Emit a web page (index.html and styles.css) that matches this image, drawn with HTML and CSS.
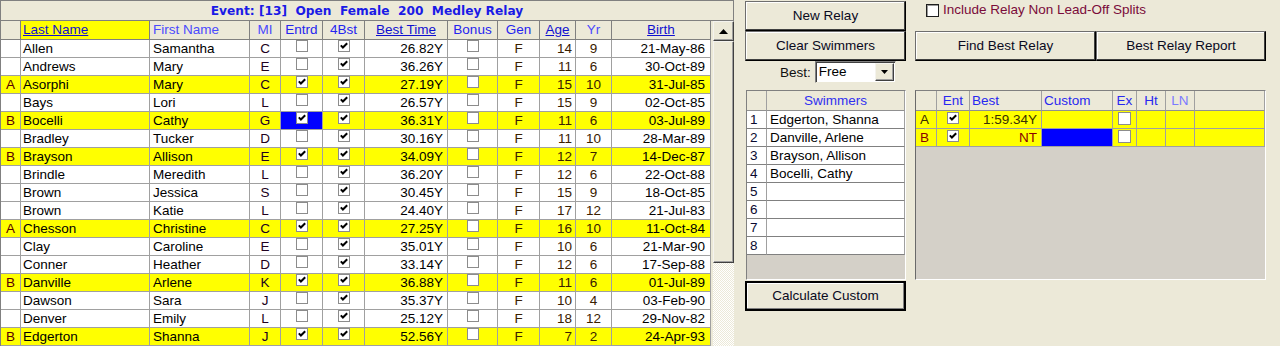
FILE: index.html
```html
<!DOCTYPE html>
<html>
<head>
<meta charset="utf-8">
<title>Relay</title>
<link rel="stylesheet" href="styles.css">
</head>
<body>
<div class="left">
  <div class="title">Event: [13]  Open  Female  200  Medley Relay</div>
  <div class="lbody">
    <div class="grid">
      <div class="row hdr">
        <div class="rh"></div>
        <div class="c ln sel-h u">Last Name</div>
        <div class="c fn lt">First Name</div>
        <div class="c ctr lt">MI</div>
        <div class="c ctr">Entrd</div>
        <div class="c ctr">4Bst</div>
        <div class="c ctr u">Best Time</div>
        <div class="c ctr">Bonus</div>
        <div class="c ctr">Gen</div>
        <div class="c ctr u">Age</div>
        <div class="c ctr lt">Yr</div>
        <div class="c ctr u">Birth</div>
      </div>

      <div class="row"><div class="rh"></div><div class="c ln">Allen</div><div class="c fn">Samantha</div><div class="c ctr mi">C</div><div class="c ctr"><span class="cb"></span></div><div class="c ctr"><span class="cb"><svg viewBox="0 0 10 10"><path d="M1.8 4.4l2.1 2.1 4.3-4.3"/></svg></span></div><div class="c bt">26.82Y</div><div class="c ctr"><span class="cb"></span></div><div class="c ctr br">F</div><div class="c age br">14</div><div class="c ctr br">9</div><div class="c bd">21-May-86</div></div>

      <div class="row"><div class="rh"></div><div class="c ln">Andrews</div><div class="c fn">Mary</div><div class="c ctr mi">E</div><div class="c ctr"><span class="cb"></span></div><div class="c ctr"><span class="cb"><svg viewBox="0 0 10 10"><path d="M1.8 4.4l2.1 2.1 4.3-4.3"/></svg></span></div><div class="c bt">36.26Y</div><div class="c ctr"><span class="cb"></span></div><div class="c ctr br">F</div><div class="c age br">11</div><div class="c ctr br">6</div><div class="c bd">30-Oct-89</div></div>

      <div class="row y"><div class="rh">A</div><div class="c ln">Asorphi</div><div class="c fn">Mary</div><div class="c ctr mi">C</div><div class="c ctr"><span class="cb"><svg viewBox="0 0 10 10"><path d="M1.8 4.4l2.1 2.1 4.3-4.3"/></svg></span></div><div class="c ctr"><span class="cb"><svg viewBox="0 0 10 10"><path d="M1.8 4.4l2.1 2.1 4.3-4.3"/></svg></span></div><div class="c bt">27.19Y</div><div class="c ctr"><span class="cb"></span></div><div class="c ctr br">F</div><div class="c age br">15</div><div class="c ctr br">10</div><div class="c bd">31-Jul-85</div></div>

      <div class="row"><div class="rh"></div><div class="c ln">Bays</div><div class="c fn">Lori</div><div class="c ctr mi">L</div><div class="c ctr"><span class="cb"></span></div><div class="c ctr"><span class="cb"><svg viewBox="0 0 10 10"><path d="M1.8 4.4l2.1 2.1 4.3-4.3"/></svg></span></div><div class="c bt">26.57Y</div><div class="c ctr"><span class="cb"></span></div><div class="c ctr br">F</div><div class="c age br">15</div><div class="c ctr br">9</div><div class="c bd">02-Oct-85</div></div>

      <div class="row y"><div class="rh">B</div><div class="c ln">Bocelli</div><div class="c fn">Cathy</div><div class="c ctr mi">G</div><div class="c ctr blue"><span class="cb"><svg viewBox="0 0 10 10"><path d="M1.8 4.4l2.1 2.1 4.3-4.3"/></svg></span></div><div class="c ctr"><span class="cb"><svg viewBox="0 0 10 10"><path d="M1.8 4.4l2.1 2.1 4.3-4.3"/></svg></span></div><div class="c bt">36.31Y</div><div class="c ctr"><span class="cb"></span></div><div class="c ctr br">F</div><div class="c age br">11</div><div class="c ctr br">6</div><div class="c bd">03-Jul-89</div></div>

      <div class="row"><div class="rh"></div><div class="c ln">Bradley</div><div class="c fn">Tucker</div><div class="c ctr mi">D</div><div class="c ctr"><span class="cb"></span></div><div class="c ctr"><span class="cb"><svg viewBox="0 0 10 10"><path d="M1.8 4.4l2.1 2.1 4.3-4.3"/></svg></span></div><div class="c bt">30.16Y</div><div class="c ctr"><span class="cb"></span></div><div class="c ctr br">F</div><div class="c age br">11</div><div class="c ctr br">10</div><div class="c bd">28-Mar-89</div></div>

      <div class="row y"><div class="rh">B</div><div class="c ln">Brayson</div><div class="c fn">Allison</div><div class="c ctr mi">E</div><div class="c ctr"><span class="cb"><svg viewBox="0 0 10 10"><path d="M1.8 4.4l2.1 2.1 4.3-4.3"/></svg></span></div><div class="c ctr"><span class="cb"><svg viewBox="0 0 10 10"><path d="M1.8 4.4l2.1 2.1 4.3-4.3"/></svg></span></div><div class="c bt">34.09Y</div><div class="c ctr"><span class="cb"></span></div><div class="c ctr br">F</div><div class="c age br">12</div><div class="c ctr br">7</div><div class="c bd">14-Dec-87</div></div>

      <div class="row"><div class="rh"></div><div class="c ln">Brindle</div><div class="c fn">Meredith</div><div class="c ctr mi">L</div><div class="c ctr"><span class="cb"></span></div><div class="c ctr"><span class="cb"><svg viewBox="0 0 10 10"><path d="M1.8 4.4l2.1 2.1 4.3-4.3"/></svg></span></div><div class="c bt">36.20Y</div><div class="c ctr"><span class="cb"></span></div><div class="c ctr br">F</div><div class="c age br">12</div><div class="c ctr br">6</div><div class="c bd">22-Oct-88</div></div>

      <div class="row"><div class="rh"></div><div class="c ln">Brown</div><div class="c fn">Jessica</div><div class="c ctr mi">S</div><div class="c ctr"><span class="cb"></span></div><div class="c ctr"><span class="cb"><svg viewBox="0 0 10 10"><path d="M1.8 4.4l2.1 2.1 4.3-4.3"/></svg></span></div><div class="c bt">30.45Y</div><div class="c ctr"><span class="cb"></span></div><div class="c ctr br">F</div><div class="c age br">15</div><div class="c ctr br">9</div><div class="c bd">18-Oct-85</div></div>

      <div class="row"><div class="rh"></div><div class="c ln">Brown</div><div class="c fn">Katie</div><div class="c ctr mi">L</div><div class="c ctr"><span class="cb"></span></div><div class="c ctr"><span class="cb"><svg viewBox="0 0 10 10"><path d="M1.8 4.4l2.1 2.1 4.3-4.3"/></svg></span></div><div class="c bt">24.40Y</div><div class="c ctr"><span class="cb"></span></div><div class="c ctr br">F</div><div class="c age br">17</div><div class="c ctr br">12</div><div class="c bd">21-Jul-83</div></div>

      <div class="row y"><div class="rh">A</div><div class="c ln">Chesson</div><div class="c fn">Christine</div><div class="c ctr mi">C</div><div class="c ctr"><span class="cb"><svg viewBox="0 0 10 10"><path d="M1.8 4.4l2.1 2.1 4.3-4.3"/></svg></span></div><div class="c ctr"><span class="cb"><svg viewBox="0 0 10 10"><path d="M1.8 4.4l2.1 2.1 4.3-4.3"/></svg></span></div><div class="c bt">27.25Y</div><div class="c ctr"><span class="cb"></span></div><div class="c ctr br">F</div><div class="c age br">16</div><div class="c ctr br">10</div><div class="c bd">11-Oct-84</div></div>

      <div class="row"><div class="rh"></div><div class="c ln">Clay</div><div class="c fn">Caroline</div><div class="c ctr mi">E</div><div class="c ctr"><span class="cb"></span></div><div class="c ctr"><span class="cb"><svg viewBox="0 0 10 10"><path d="M1.8 4.4l2.1 2.1 4.3-4.3"/></svg></span></div><div class="c bt">35.01Y</div><div class="c ctr"><span class="cb"></span></div><div class="c ctr br">F</div><div class="c age br">10</div><div class="c ctr br">6</div><div class="c bd">21-Mar-90</div></div>

      <div class="row"><div class="rh"></div><div class="c ln">Conner</div><div class="c fn">Heather</div><div class="c ctr mi">D</div><div class="c ctr"><span class="cb"></span></div><div class="c ctr"><span class="cb"><svg viewBox="0 0 10 10"><path d="M1.8 4.4l2.1 2.1 4.3-4.3"/></svg></span></div><div class="c bt">33.14Y</div><div class="c ctr"><span class="cb"></span></div><div class="c ctr br">F</div><div class="c age br">12</div><div class="c ctr br">6</div><div class="c bd">17-Sep-88</div></div>

      <div class="row y"><div class="rh">B</div><div class="c ln">Danville</div><div class="c fn">Arlene</div><div class="c ctr mi">K</div><div class="c ctr"><span class="cb"><svg viewBox="0 0 10 10"><path d="M1.8 4.4l2.1 2.1 4.3-4.3"/></svg></span></div><div class="c ctr"><span class="cb"><svg viewBox="0 0 10 10"><path d="M1.8 4.4l2.1 2.1 4.3-4.3"/></svg></span></div><div class="c bt">36.88Y</div><div class="c ctr"><span class="cb"></span></div><div class="c ctr br">F</div><div class="c age br">11</div><div class="c ctr br">6</div><div class="c bd">01-Jul-89</div></div>

      <div class="row"><div class="rh"></div><div class="c ln">Dawson</div><div class="c fn">Sara</div><div class="c ctr mi">J</div><div class="c ctr"><span class="cb"></span></div><div class="c ctr"><span class="cb"><svg viewBox="0 0 10 10"><path d="M1.8 4.4l2.1 2.1 4.3-4.3"/></svg></span></div><div class="c bt">35.37Y</div><div class="c ctr"><span class="cb"></span></div><div class="c ctr br">F</div><div class="c age br">10</div><div class="c ctr br">4</div><div class="c bd">03-Feb-90</div></div>

      <div class="row"><div class="rh"></div><div class="c ln">Denver</div><div class="c fn">Emily</div><div class="c ctr mi">L</div><div class="c ctr"><span class="cb"></span></div><div class="c ctr"><span class="cb"><svg viewBox="0 0 10 10"><path d="M1.8 4.4l2.1 2.1 4.3-4.3"/></svg></span></div><div class="c bt">25.12Y</div><div class="c ctr"><span class="cb"></span></div><div class="c ctr br">F</div><div class="c age br">18</div><div class="c ctr br">12</div><div class="c bd">29-Nov-82</div></div>

      <div class="row y"><div class="rh">B</div><div class="c ln">Edgerton</div><div class="c fn">Shanna</div><div class="c ctr mi">J</div><div class="c ctr"><span class="cb"><svg viewBox="0 0 10 10"><path d="M1.8 4.4l2.1 2.1 4.3-4.3"/></svg></span></div><div class="c ctr"><span class="cb"><svg viewBox="0 0 10 10"><path d="M1.8 4.4l2.1 2.1 4.3-4.3"/></svg></span></div><div class="c bt">52.56Y</div><div class="c ctr"><span class="cb"></span></div><div class="c ctr br">F</div><div class="c age br">7</div><div class="c ctr br">2</div><div class="c bd">24-Apr-93</div></div>
    </div>
    <div class="vscroll">
      <div class="sbtn"><svg width="9" height="5" viewBox="0 0 9 5"><path d="M4.5 0L9 5H0z"/></svg></div>
      <div class="thumb"></div>
      <div class="track"></div>
    </div>
  </div>
</div>

<div class="right">
  <div class="col1">
    <div class="btn">New Relay</div>
    <div class="btn">Clear Swimmers</div>
    <div class="bestrow">
      <span class="blbl">Best:</span>
      <div class="combo">
        <span class="cval">Free</span>
        <span class="carr"><svg width="7" height="4" viewBox="0 0 7 4"><path d="M0 0H7L3.5 4z"/></svg></span>
      </div>
    </div>
    <div class="swgrid">
      <div class="srow shdr"><div class="sc0"></div><div class="sc1 hc">Swimmers</div></div>
      <div class="srow"><div class="sc0">1</div><div class="sc1">Edgerton, Shanna</div></div>
      <div class="srow"><div class="sc0">2</div><div class="sc1">Danville, Arlene</div></div>
      <div class="srow"><div class="sc0">3</div><div class="sc1">Brayson, Allison</div></div>
      <div class="srow"><div class="sc0">4</div><div class="sc1">Bocelli, Cathy</div></div>
      <div class="srow"><div class="sc0">5</div><div class="sc1"></div></div>
      <div class="srow"><div class="sc0">6</div><div class="sc1"></div></div>
      <div class="srow"><div class="sc0">7</div><div class="sc1"></div></div>
      <div class="srow"><div class="sc0">8</div><div class="sc1"></div></div>
      <div class="gfill"></div>
    </div>
    <div class="btn dflt">Calculate Custom</div>
  </div>

  <div class="col2">
    <div class="opts">
      <span class="obox"></span>
      <span class="otxt">Include Relay Non Lead-Off Splits</span>
    </div>
    <div class="btnrow">
      <div class="btn wfind">Find Best Relay</div>
      <div class="btn wrep">Best Relay Report</div>
    </div>
    <div class="rgrid">
      <div class="rrow rhdr">
        <div class="rc"></div>
        <div class="rc ctr">Ent</div>
        <div class="rc lft">Best</div>
        <div class="rc lft">Custom</div>
        <div class="rc ctr">Ex</div>
        <div class="rc ctr">Ht</div>
        <div class="rc ctr lnh">LN</div>
        <div class="rc"></div>
      </div>
      <div class="rrow y">
        <div class="rc rlab">A</div>
        <div class="rc ctr"><span class="cb"><svg viewBox="0 0 10 10"><path d="M1.8 4.4l2.1 2.1 4.3-4.3"/></svg></span></div>
        <div class="rc rt olive">1:59.34Y</div>
        <div class="rc"></div>
        <div class="rc ctr"><span class="cb big"></span></div>
        <div class="rc"></div>
        <div class="rc"></div>
        <div class="rc"></div>
      </div>
      <div class="rrow y">
        <div class="rc rlab red">B</div>
        <div class="rc ctr"><span class="cb"><svg viewBox="0 0 10 10"><path d="M1.8 4.4l2.1 2.1 4.3-4.3"/></svg></span></div>
        <div class="rc rt red">NT</div>
        <div class="rc blue"></div>
        <div class="rc ctr"><span class="cb big"></span></div>
        <div class="rc"></div>
        <div class="rc"></div>
        <div class="rc"></div>
      </div>
      <div class="gfill"></div>
    </div>
  </div>
</div>
</body>
</html>
```

FILE: styles.css
```css
* { box-sizing: border-box; }
html, body { margin: 0; padding: 0; }
body {
  width: 1280px;
  height: 346px;
  overflow: hidden;
  background: #ECE9D8;
  font-family: "Liberation Sans", Arial, sans-serif;
  font-size: 13.5px;
  color: #000;
  display: flex;
  align-items: flex-start;
}

/* ---------- left grid panel ---------- */
.left {
  width: 734px;
  flex: none;
  border-top: 1px solid #808080;
  border-left: 1px solid #808080;
}
.title {
  height: 20px;
  border-bottom: 1px solid #808080;
  border-right: 1px solid #808080;
  text-align: center;
  white-space: pre;
  font-family: "DejaVu Sans", Verdana, sans-serif;
  font-weight: bold;
  font-size: 12.2px;
  line-height: 19px;
  padding-top: 1px;
  color: #1a1ae6;
}
.lbody { display: flex; }
.grid { width: 710px; flex: none; }
.row {
  display: grid;
  grid-template-columns: 20px 129px 100px 31px 42px 42px 83px 50px 42px 36px 36px 99px;
  height: 18px;
  background: #fff;
}
.row > div {
  border-right: 1px solid #a0a0a0;
  border-bottom: 1px solid #a0a0a0;
  line-height: 17px;
  white-space: nowrap;
  overflow: hidden;
}
.row.y { background: #ffff00; }
.row.hdr { height: 19px; background: #ECE9D8; }
.row.hdr > div {
  border-right-color: #808080;
  border-bottom-color: #808080;
  line-height: 18px;
  color: #2424f0;
}
.row.hdr > .lt { color: #4a4aff; }
.row.hdr > .u { text-decoration: underline; color: #1010d0; }
.row.hdr > .sel-h { background: #ffff00; }
.rh { text-align: center; color: #5a0000; }
.c { padding: 0 2px; }
.ln { padding-left: 2px; }
.fn { padding-left: 3px; }
.ctr { text-align: center; }
.mi { color: #200020; }
.br { color: #3a2000; }
.bt { text-align: right; padding-right: 4px; }
.age { text-align: right; padding-right: 3px; }
.bd { text-align: right; padding-right: 5px; }
.row > .blue, .rc.blue { background: #0000ff; }

/* checkbox */
.cb {
  display: inline-block;
  width: 12px;
  height: 12px;
  border: 1px solid #8c8c8c;
  background: #fff;
  vertical-align: top;
  margin-top: 0;
}
.cb svg {
  display: block;
  width: 10px;
  height: 10px;
  fill: none;
  stroke: #000;
  stroke-width: 2;
}
.cb.big { width: 13px; height: 13px; margin-top: 1px; }

/* scrollbar */
.vscroll {
  width: 21px;
  margin-left: 2px;
  height: 325px;
  display: flex;
  flex-direction: column;
}
.sbtn, .thumb {
  background: #ECE9D8;
  border: 1px solid;
  border-color: #f4f3ee #404040 #404040 #f4f3ee;
  box-shadow: inset -1px -1px #a0a0a0;
}
.sbtn {
  height: 20px;
  display: flex;
  align-items: center;
  justify-content: center;
}
.sbtn svg { fill: #000; }
.thumb { height: 222px; }
.track {
  flex: 1;
  background: repeating-conic-gradient(#ffffff 0 25%, #ECE9D8 0 50%) 0 0 / 2px 2px;
}

/* ---------- right side ---------- */
.right {
  display: flex;
  gap: 9px;
  margin-left: 11px;
  padding-top: 1px;
}
.col1 { width: 161px; display: flex; flex-direction: column; }
.col2 { width: 351px; display: flex; flex-direction: column; }

.btn {
  height: 30px;
  background: #ECE9D8;
  border: 1px solid;
  border-color: #6e6e6e #000 #000 #6e6e6e;
  box-shadow: inset -1px -1px #404040, inset 1px 1px #ffffff;
  text-align: center;
  line-height: 27px;
  color: #0a0a1e;
  white-space: nowrap;
}
.btn.dflt {
  margin-top: 1px;
  border: 2px solid #000;
  box-shadow: inset -1px -1px #808080, inset 1px 1px #ffffff;
  line-height: 25px;
}

.bestrow {
  height: 22px;
  display: flex;
  align-items: center;
  padding-left: 35px;
  gap: 4px;
}
.blbl { color: #101010; }
.combo {
  width: 81px;
  height: 22px;
  background: #fff;
  border: 1px solid;
  border-color: #808080 #ECE9D8 #ECE9D8 #808080;
  box-shadow: inset 1px 1px #404040;
  display: flex;
  align-items: center;
  justify-content: space-between;
  padding: 1px 1px 1px 3px;
}
.cval { line-height: 18px; }
.carr {
  width: 19px;
  height: 18px;
  background: #ECE9D8;
  border: 1px solid;
  border-color: #f4f3ee #404040 #404040 #f4f3ee;
  box-shadow: inset -1px -1px #a0a0a0;
  display: flex;
  align-items: center;
  justify-content: center;
}
.carr svg { fill: #000; }

.swgrid {
  margin-top: 7px;
  margin-left: 1px;
  width: 160px;
  height: 190px;
  border: 1px solid;
  border-color: #808080 #ffffff #ffffff #808080;
  background: #D4D0C8;
  display: flex;
  flex-direction: column;
}
.srow {
  display: grid;
  grid-template-columns: 20px 138px;
  height: 18px;
  background: #fff;
  flex: none;
}
.srow > div {
  border-right: 1px solid #a0a0a0;
  border-bottom: 1px solid #808080;
  line-height: 17px;
  white-space: nowrap;
  overflow: hidden;
}
.srow.shdr { height: 20px; background: #ECE9D8; }
.srow.shdr > div { line-height: 19px; border-bottom-color: #909090; }
.sc0 { padding-left: 3px; color: #0a0a30; }
.sc1 { padding-left: 3px; }
.hc { text-align: center; color: #3030f0; padding-left: 0; }
.gfill { flex: 1; background: #D4D0C8; }

.opts {
  height: 30px;
  display: flex;
  align-items: flex-start;
  padding-left: 11px;
  padding-top: 3px;
  gap: 4px;
}
.obox {
  width: 13px;
  height: 13px;
  background: #fff;
  border: 1px solid #1e1e1e;
  box-shadow: inset 1px 1px #9a9a9a;
  flex: none;
}
.otxt { color: #7a0b3a; line-height: 14px; margin-top: -1px; }

.btnrow { display: flex; }
.wfind { width: 181px; }
.wrep { width: 170px; }

.rgrid {
  margin-top: 29px;
  width: 351px;
  height: 190px;
  border: 1px solid;
  border-color: #808080 #ffffff #ffffff #6a6a6a;
  background: #D4D0C8;
  display: flex;
  flex-direction: column;
}
.rrow {
  display: grid;
  grid-template-columns: 21px 33px 72px 71px 24px 29px 29px 70px;
  height: 18px;
  flex: none;
}
.rrow.y { background: #ffff00; }
.rrow > div {
  border-right: 1px solid #a0a0a0;
  border-bottom: 1px solid #a0a0a0;
  line-height: 17px;
  white-space: nowrap;
  overflow: hidden;
}
.rrow.rhdr { height: 20px; background: #ECE9D8; }
.rrow.rhdr > div { line-height: 19px; color: #2828f0; border-bottom-color: #909090; }
.rrow.rhdr > .lnh { color: #7a7aff; }
.lft { padding-left: 2px; }
.rt { text-align: right; padding-right: 4px; }
.rlab { padding-left: 4px; color: #3a2a00; }
.olive { color: #3a3000; }
.red { color: #8a0000; }
.rrow .cb { margin-top: 1px; }
```
